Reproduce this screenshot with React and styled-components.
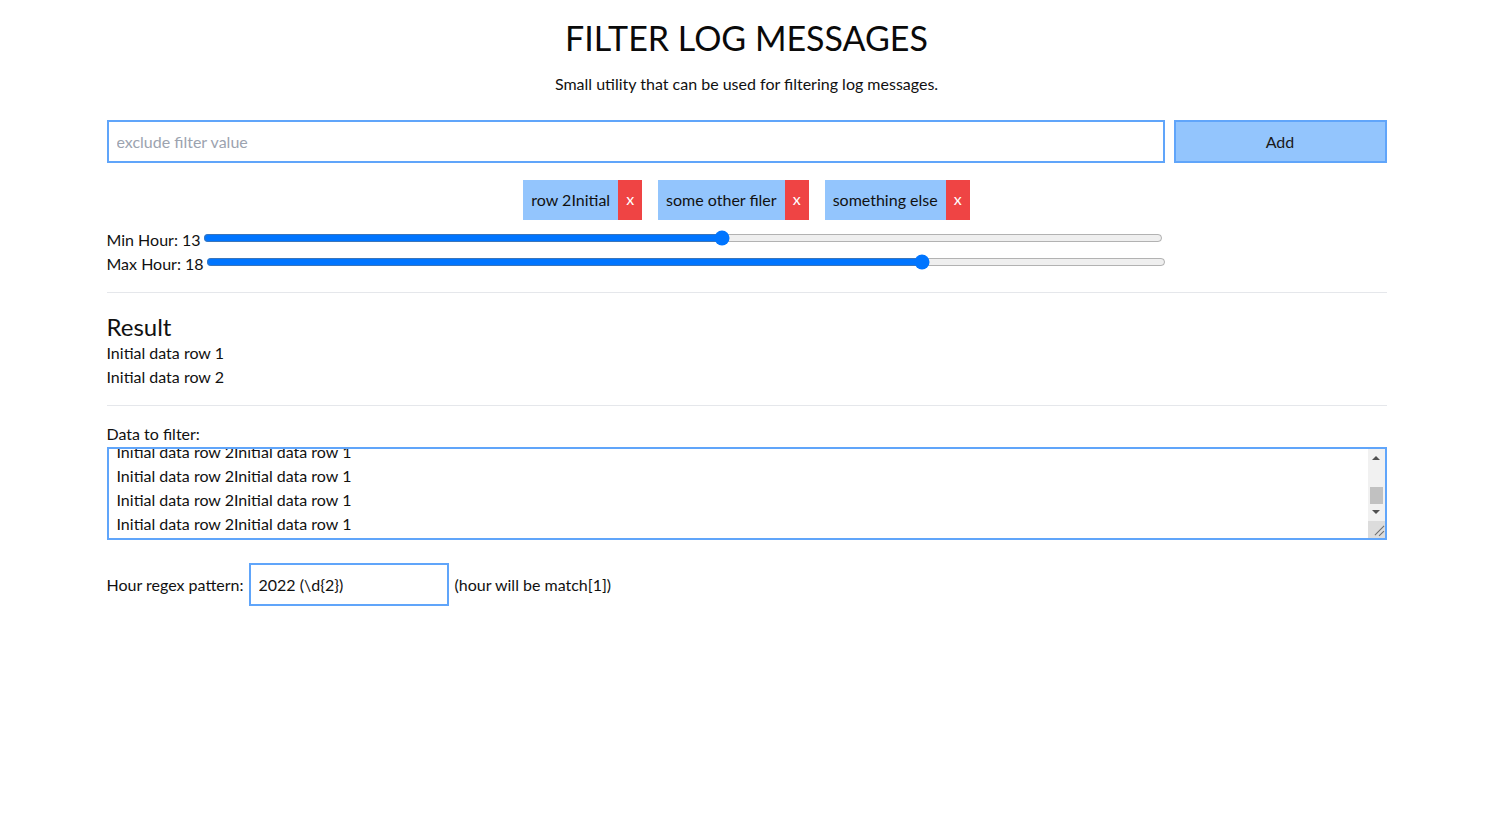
import React, { useEffect, useRef, useState } from "react";
import styled, { createGlobalStyle } from "styled-components";

const Global = createGlobalStyle`
  * { box-sizing: border-box; }
  html, body { margin: 0; padding: 0; background: #ffffff; }
  body {
    font-family: Lato, "Noto Sans", "Open Sans", sans-serif;
    font-size: 16px;
    line-height: 24px;
    color: #111111;
  }
`;

const Page = styled.main`
  max-width: 1280px;
  margin: 0 auto;
  padding-top: 16px;
`;

const Title = styled.h1`
  margin: 0;
  text-align: center;
  font-size: 34px;
  line-height: 44px;
  font-weight: 400;
  color: #0a0a0a;
`;

const Subtitle = styled.p`
  margin: 12px 0 0;
  text-align: center;
  font-size: 16px;
  line-height: 24px;
`;

const AddRow = styled.div`
  display: flex;
  gap: 9px;
  margin-top: 24px;
`;

const TextInput = styled.input`
  flex: 1;
  height: 43px;
  border: 2px solid #60a5fa;
  padding: 0 8px;
  font: inherit;
  color: #111;
  outline: none;
  &::placeholder { color: #9ca3af; }
`;

const AddButton = styled.button`
  width: 213px;
  height: 43px;
  background: #93c5fd;
  border: 2px solid #60a5fa;
  font: inherit;
  color: #1a1a1a;
  cursor: pointer;
`;

const TagList = styled.div`
  display: flex;
  justify-content: center;
  flex-wrap: wrap;
  gap: 16px;
  margin-top: 17px;
`;

const Tag = styled.div`
  display: flex;
  height: 40px;
`;

const TagText = styled.span`
  display: flex;
  align-items: center;
  padding: 0 8px;
  background: #93c5fd;
`;

const TagRemove = styled.button`
  width: 24px;
  border: none;
  background: #ef4444;
  color: #ffffff;
  font: inherit;
  padding: 0 0 2px;
  cursor: pointer;
`;

const Sliders = styled.div`
  margin-top: 8px;
`;

const SliderRow = styled.label`
  display: flex;
  align-items: center;
  height: 24px;
`;

const Range = styled.input`
  width: 960px;
  margin: 0 0 0 2px;
  position: relative;
  top: -2px;
`;

const Divider = styled.hr`
  border: none;
  border-top: 1px solid #e5e7eb;
  margin: ${(p) => p.$top}px 0 0;
`;

const ResultTitle = styled.h2`
  margin: 20px 0 0;
  font-size: 24px;
  line-height: 28px;
  font-weight: 400;
`;

const ResultLine = styled.div`
  line-height: 24px;
`;

const FieldLabel = styled.div`
  margin-top: 16px;
  line-height: 24px;
`;

const AreaWrap = styled.div`
  position: relative;
  margin-top: 1px;
`;

const DataArea = styled.textarea`
  display: block;
  width: 100%;
  height: 93px;
  border: 2px solid #60a5fa;
  padding: 2px 27px 2px 8px;
  font: inherit;
  line-height: 24px;
  color: #111;
  resize: vertical;
  outline: none;
  overflow: hidden;

  &::-webkit-resizer {
    background-color: #dcdcdc;
  }
`;

const ScrollBar = styled.div`
  position: absolute;
  top: 2px;
  right: 2px;
  bottom: 2px;
  width: 17px;
  display: flex;
  flex-direction: column;
  background: #f1f1f1;
  pointer-events: none;
`;

const ArrowButton = styled.div`
  height: 17px;
  display: flex;
  align-items: center;
  justify-content: center;

  &::before {
    content: "";
    width: 0;
    height: 0;
    border-left: 4px solid transparent;
    border-right: 4px solid transparent;
    ${(p) =>
      p.$dir === "up"
        ? "border-bottom: 4px solid #505050; margin-top: 1px;"
        : "border-top: 4px solid #505050; margin-bottom: 1px;"}
  }
`;

const Track = styled.div`
  flex: 1;
  display: flex;
  flex-direction: column;
  justify-content: flex-end;
  padding: 0 2px;
`;

const Thumb = styled.div`
  height: 17px;
  background: #c1c1c1;
`;

const Resizer = styled.div`
  height: 17px;
  background-color: #dcdcdc;
  position: relative;

  &::before,
  &::after {
    content: "";
    position: absolute;
    height: 1px;
    background: #6b6b6b;
    transform: rotate(-45deg);
    transform-origin: center;
  }
  &::before {
    width: 13px;
    right: -1px;
    bottom: 7px;
  }
  &::after {
    width: 7px;
    right: 0px;
    bottom: 4px;
  }
`;

const RegexRow = styled.div`
  display: flex;
  align-items: center;
  margin-top: 23px;
`;

const RegexInput = styled.input`
  width: 200px;
  height: 43px;
  margin: 0 6px 0 5px;
  border: 2px solid #60a5fa;
  padding: 0 8px;
  font: inherit;
  color: #111;
  outline: none;
`;

const tags = ["row 2Initial", "some other filer", "something else"];
const data = Array.from({ length: 8 }, () => "Initial data row 2Initial data row 1").join("\n");

export default function App() {
  const areaRef = useRef(null);
  const [minH, setMinH] = useState(13);
  const [maxH, setMaxH] = useState(18);

  useEffect(() => {
    const el = areaRef.current;
    if (el) el.scrollTop = el.scrollHeight;
  }, []);

  return (
    <>
      <Global />
      <Page>
        <Title>FILTER LOG MESSAGES</Title>
        <Subtitle>Small utility that can be used for filtering log messages.</Subtitle>
        <AddRow>
          <TextInput placeholder="exclude filter value" />
          <AddButton>Add</AddButton>
        </AddRow>
        <TagList>
          {tags.map((t) => (
            <Tag key={t}>
              <TagText>{t}</TagText>
              <TagRemove>x</TagRemove>
            </Tag>
          ))}
        </TagList>
        <Sliders>
          <SliderRow>
            Min Hour: {minH}
            <Range type="range" min="0" max="24" value={minH} onChange={(e) => setMinH(+e.target.value)} />
          </SliderRow>
          <SliderRow>
            Max Hour: {maxH}
            <Range type="range" min="0" max="24" value={maxH} onChange={(e) => setMaxH(+e.target.value)} />
          </SliderRow>
        </Sliders>
        <Divider $top={16} />
        <ResultTitle>Result</ResultTitle>
        <ResultLine>Initial data row 1</ResultLine>
        <ResultLine>Initial data row 2</ResultLine>
        <Divider $top={16} />
        <FieldLabel>Data to filter:</FieldLabel>
        <AreaWrap>
          <DataArea ref={areaRef} defaultValue={data} />
          <ScrollBar>
            <ArrowButton $dir="up" />
            <Track>
              <Thumb />
            </Track>
            <ArrowButton $dir="down" />
            <Resizer />
          </ScrollBar>
        </AreaWrap>
        <RegexRow>
          Hour regex pattern:
          <RegexInput defaultValue="2022 (\d{2})" />
          (hour will be match[1])
        </RegexRow>
      </Page>
    </>
  );
}
